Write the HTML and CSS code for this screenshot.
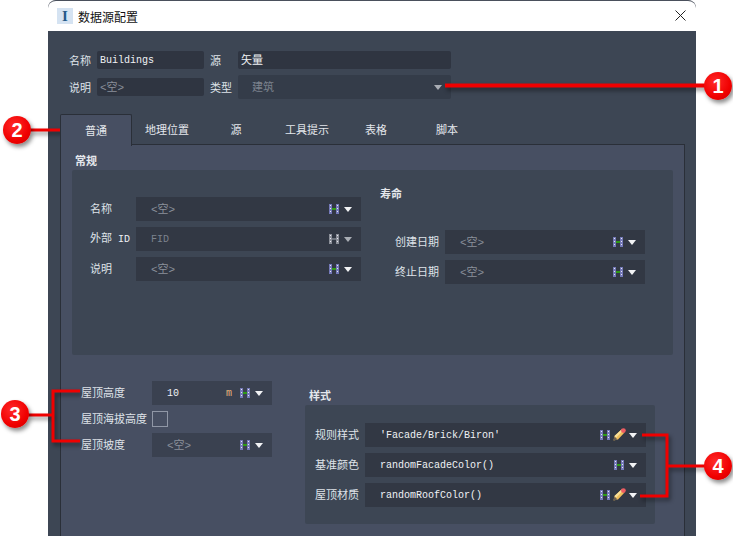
FILE: index.html
```html
<!DOCTYPE html>
<html lang="zh-CN">
<head>
    <meta charset="UTF-8">
    <title>数据源配置</title>
    <link rel="stylesheet" href="styles.css">
</head>
<body>
    <svg class="defs" width="0" height="0">
        <symbol id="dd" viewBox="0 0 10 10">
            <rect x="0" y="0" width="3" height="10" fill="currentColor"/>
            <rect x="7" y="0" width="3" height="10" fill="currentColor"/>
            <rect x="1" y="1" width="1" height="1" fill="#e8e8f4"/>
            <rect x="1" y="4" width="1" height="1" fill="#e8e8f4"/>
            <rect x="1" y="7" width="1" height="1" fill="#e8e8f4"/>
            <rect x="8" y="1" width="1" height="1" fill="#e8e8f4"/>
            <rect x="8" y="4" width="1" height="1" fill="#e8e8f4"/>
            <rect x="8" y="7" width="1" height="1" fill="#e8e8f4"/>
            <rect x="3" y="4" width="4" height="2" fill="var(--dd-mid)"/>
        </symbol>
        <symbol id="pencil" viewBox="0 0 13 13">
            <path d="M0.5 12.5 L1.5 8 L8.5 1.5 L11.5 4.5 L5 11.5 Z" fill="#efbe5c"/>
            <path d="M1.5 8 L8.5 1.5 L9.8 2.8 L3 9.8 Z" fill="#f9e09a"/>
            <path d="M0.5 12.5 L1.5 8.5 L4.5 11.5 Z" fill="#6a5d50"/>
            <circle cx="10.4" cy="2.6" r="2.4" fill="#ee5d62"/>
        </symbol>
    </svg>

    <div class="window">
        <div class="titlebar">
            <span class="app-icon">I</span>
            <span class="title">数据源配置</span>
            <svg class="close" viewBox="0 0 11 11"><path d="M0.5 0.5 L10.5 10.5 M10.5 0.5 L0.5 10.5" stroke="#222" fill="none"/></svg>
        </div>

        <div class="head-form">
            <label class="lbl">名称</label>
            <div class="input small"><span class="val">Buildings</span></div>
            <label class="lbl lbl-b">源</label>
            <div class="input small"><span class="val cn">矢量</span></div>
            <label class="lbl">说明</label>
            <div class="input small"><span class="val ph">&lt;空&gt;</span></div>
            <label class="lbl lbl-b">类型</label>
            <div class="input select"><span class="val cn dim">建筑</span><i class="arrow dim-arrow"></i></div>
        </div>

        <div class="tabs">
            <span class="tab active">普通</span>
            <span class="tab">地理位置</span>
            <span class="tab">源</span>
            <span class="tab">工具提示</span>
            <span class="tab">表格</span>
            <span class="tab">脚本</span>
        </div>

        <div class="panel">
            <h4 class="group-title">常规</h4>
            <div class="group general">
                <div class="col-left">
                    <div class="row">
                        <label class="lbl">名称</label>
                        <div class="field"><span class="val ph">&lt;空&gt;</span><svg class="dd"><use href="#dd"/></svg><i class="arrow"></i></div>
                    </div>
                    <div class="row">
                        <label class="lbl">外部<span class="latin">ID</span></label>
                        <div class="field"><span class="val dim">FID</span><svg class="dd off"><use href="#dd"/></svg><i class="arrow dim-arrow"></i></div>
                    </div>
                    <div class="row">
                        <label class="lbl">说明</label>
                        <div class="field"><span class="val ph">&lt;空&gt;</span><svg class="dd"><use href="#dd"/></svg><i class="arrow"></i></div>
                    </div>
                </div>
                <div class="col-right">
                    <h4 class="life-title">寿命</h4>
                    <div class="row">
                        <label class="lbl">创建日期</label>
                        <div class="field"><span class="val ph">&lt;空&gt;</span><svg class="dd"><use href="#dd"/></svg><i class="arrow"></i></div>
                    </div>
                    <div class="row">
                        <label class="lbl">终止日期</label>
                        <div class="field"><span class="val ph">&lt;空&gt;</span><svg class="dd"><use href="#dd"/></svg><i class="arrow"></i></div>
                    </div>
                </div>
            </div>

            <div class="lower">
                <div class="roof">
                    <div class="row">
                        <label class="lbl">屋顶高度</label>
                        <div class="field light"><span class="val">10</span><span class="unit">m</span><svg class="dd"><use href="#dd"/></svg><i class="arrow"></i></div>
                    </div>
                    <div class="row">
                        <label class="lbl">屋顶海拔高度</label>
                        <span class="check"></span>
                    </div>
                    <div class="row">
                        <label class="lbl">屋顶坡度</label>
                        <div class="field light"><span class="val ph">&lt;空&gt;</span><svg class="dd"><use href="#dd"/></svg><i class="arrow"></i></div>
                    </div>
                </div>
                <div class="style-col">
                    <h4 class="group-title style-title">样式</h4>
                    <div class="group style-group">
                        <div class="row">
                            <label class="lbl">规则样式</label>
                            <div class="field"><span class="val">'Facade/Brick/Biron'</span><svg class="dd"><use href="#dd"/></svg><svg class="pencil"><use href="#pencil"/></svg><i class="arrow"></i></div>
                        </div>
                        <div class="row">
                            <label class="lbl">基准颜色</label>
                            <div class="field"><span class="val">randomFacadeColor()</span><svg class="dd"><use href="#dd"/></svg><i class="arrow"></i></div>
                        </div>
                        <div class="row">
                            <label class="lbl">屋顶材质</label>
                            <div class="field"><span class="val">randomRoofColor()</span><svg class="dd"><use href="#dd"/></svg><svg class="pencil"><use href="#pencil"/></svg><i class="arrow"></i></div>
                        </div>
                    </div>
                </div>
            </div>
        </div>
    </div>

    <!-- red callouts drawn over the dialog -->
    <svg class="callouts" width="733" height="552" viewBox="0 0 733 552">
        <g fill="none" stroke="#f00000" stroke-width="3">
            <path d="M445 85.5 H705" stroke-width="4"/>
            <path d="M30 130 H75"/>
            <path d="M80 391 H53 V441 H80 M28 415 H53"/>
            <path d="M642 435 H667 V496 H640 M667 466 H705"/>
        </g>
    </svg>
    <span class="badge b1">1</span>
    <span class="badge b2">2</span>
    <span class="badge b3">3</span>
    <span class="badge b4">4</span>
</body>
</html>
```

FILE: styles.css
```css
* {
    box-sizing: border-box;
}
body {
    margin: 0;
    height: 552px;
    background: white;
    overflow: hidden;
    position: relative;
    font-family: "Noto Sans CJK SC", "Liberation Sans", sans-serif;
    font-size: 11px;
    color: #e4e7ec;
}
.defs {
    position: absolute;
}
.window {
    margin-left: 48px;
    width: 648px;
    height: 536px;
    background: #3d4654;
    border-top: 1px solid #4a505c;
    border-radius: 8px 8px 0 0;
    overflow: hidden;
}
.titlebar {
    height: 30px;
    background: white;
    display: flex;
    align-items: center;
    padding-left: 9px;
    padding-right: 10px;
    color: #111;
}
.app-icon {
    width: 16px;
    height: 16px;
    background: #d5e3f2;
    color: #25598a;
    font: bold 15px/16px "Liberation Serif", serif;
    text-align: center;
}
.title {
    margin-left: 5px;
    font-size: 12px;
    flex: 1;
}
.close {
    width: 11px;
    height: 11px;
    margin-top: -1px;
}

/* top form */
.head-form {
    display: grid;
    grid-template-columns: 28px 107px 34px 213px;
    grid-template-rows: 18px 24px;
    row-gap: 6px;
    align-items: center;
    padding: 20px 0 0 21px;
}
.lbl {
    white-space: nowrap;
    line-height: 16px;
    color: #dfe3e9;
}
.latin {
    font-family: "Liberation Mono", monospace;
    font-size: 10px;
    margin-left: 6px;
    color: #f0f2f5;
}
.lbl-b {
    padding-left: 6px;
}
.input {
    height: 18px;
    background: #2f3541;
    border-radius: 2px;
    display: flex;
    align-items: center;
    padding-left: 3px;
}
.input.select {
    height: 24px;
    background: #343c49;
    padding-left: 14px;
    padding-right: 9px;
    justify-content: space-between;
}
.val {
    font-family: "Liberation Mono", "Noto Sans CJK SC", monospace;
    font-size: 10px;
    line-height: 14px;
    padding-top: 1px;
    white-space: pre;
    color: #f0f2f5;
}
.val.cn {
    font-size: 11px;
}
.val.dim {
    color: #7c838e;
}
.val.ph {
    font-size: 11px;
    color: #8a909a;
}
.arrow {
    width: 0;
    height: 0;
    border-left: 4px solid transparent;
    border-right: 4px solid transparent;
    border-top: 5px solid #f2f3f5;
    flex: none;
}
.dim-arrow {
    border-top-color: #a9adb4;
}

/* tabs */
.tabs {
    display: grid;
    grid-template-columns: 72px 70px 68px 74px 64px 78px;
    height: 30px;
    margin: 15px 0 0 12px;
    position: relative;
    z-index: 1;
}
.tab {
    text-align: center;
    line-height: 31px;
    color: #e4e7ec;
}
.tab.active {
    height: 32px;
    background: #474f62;
    border: 1px solid #2a2f38;
    border-bottom: none;
    border-radius: 2px 2px 0 0;
    line-height: 30px;
}
.panel {
    margin-left: 12px;
    width: 625px;
    height: 392px;
    background: #474f62;
    border: 1px solid #2a2f38;
    border-bottom: none;
    padding: 0 11px;
}
.group-title {
    margin: 0;
    height: 25px;
    padding: 7px 0 0 3px;
    font-size: 11px;
    line-height: 16px;
    font-weight: 700;
}
.group {
    background: #3d4654;
    border-radius: 2px;
}
.general {
    width: 601px;
    height: 185px;
    display: grid;
    grid-template-columns: 308px 1fr;
}
.row {
    display: flex;
    align-items: center;
    margin-bottom: 6px;
}
.row .lbl {
    margin-top: -2px;
}
.field {
    height: 24px;
    background: #323844;
    display: flex;
    align-items: center;
    padding: 0 9px 0 15px;
    flex: none;
}
.field .val {
    flex: 1;
}
.field.light {
    background: #3a4150;
    width: 120px;
}
.dd {
    width: 10px;
    height: 10px;
    margin-right: 5px;
    color: #7479b8;
    --dd-mid: #2f9a16;
    flex: none;
}
.dd.off {
    color: #8b8f98;
    --dd-mid: #6e747e;
}
.pencil {
    width: 13px;
    height: 13px;
    margin: -1px 3px 0 -2px;
    flex: none;
}
.unit {
    font-family: "Liberation Mono", monospace;
    font-size: 10px;
    color: #e8b27a;
    margin-right: 8px;
}

/* general group columns */
.col-left {
    padding: 27px 0 0 18px;
}
.col-left .lbl {
    width: 46px;
}
.col-left .field {
    width: 225px;
}
.life-title {
    margin: 15px 0 29px;
    font-size: 11px;
    line-height: 16px;
    font-weight: 700;
}
.col-right .lbl {
    width: 65px;
    padding-right: 6px;
    text-align: right;
}
.col-right .field {
    width: 200px;
}

/* lower area */
.lower {
    display: grid;
    grid-template-columns: 233px 350px;
}
.roof {
    padding: 26px 0 0 9px;
}
.roof .lbl {
    width: 71px;
}
.check {
    width: 16px;
    height: 16px;
    border: 1px solid #9097a6;
    background: #474f62;
}
.style-title {
    margin-top: 32px;
    height: 18px;
    padding: 0 0 0 4px;
}
.style-group {
    height: 119px;
    padding: 18px 0 0 10px;
}
.style-group .lbl {
    width: 50px;
}
.style-group .field {
    width: 281px;
}

/* callouts */
.callouts {
    position: absolute;
    left: 0;
    top: 0;
    filter: drop-shadow(2px 3px 2px rgba(0, 0, 0, 0.45));
}
.badge {
    position: absolute;
    width: 28px;
    height: 28px;
    border-radius: 50%;
    background: radial-gradient(circle at 40% 35%, #ff2a2a, #f00000 60%, #c80000);
    box-shadow: 2px 3px 4px rgba(0, 0, 0, 0.45);
    color: white;
    font: bold 20px/28px "Liberation Sans", sans-serif;
    text-align: center;
}
.b1 {
    left: 704px;
    top: 72px;
}
.b2 {
    left: 3px;
    top: 116px;
}
.b3 {
    left: 1px;
    top: 400px;
}
.b4 {
    left: 704px;
    top: 452px;
}
```
